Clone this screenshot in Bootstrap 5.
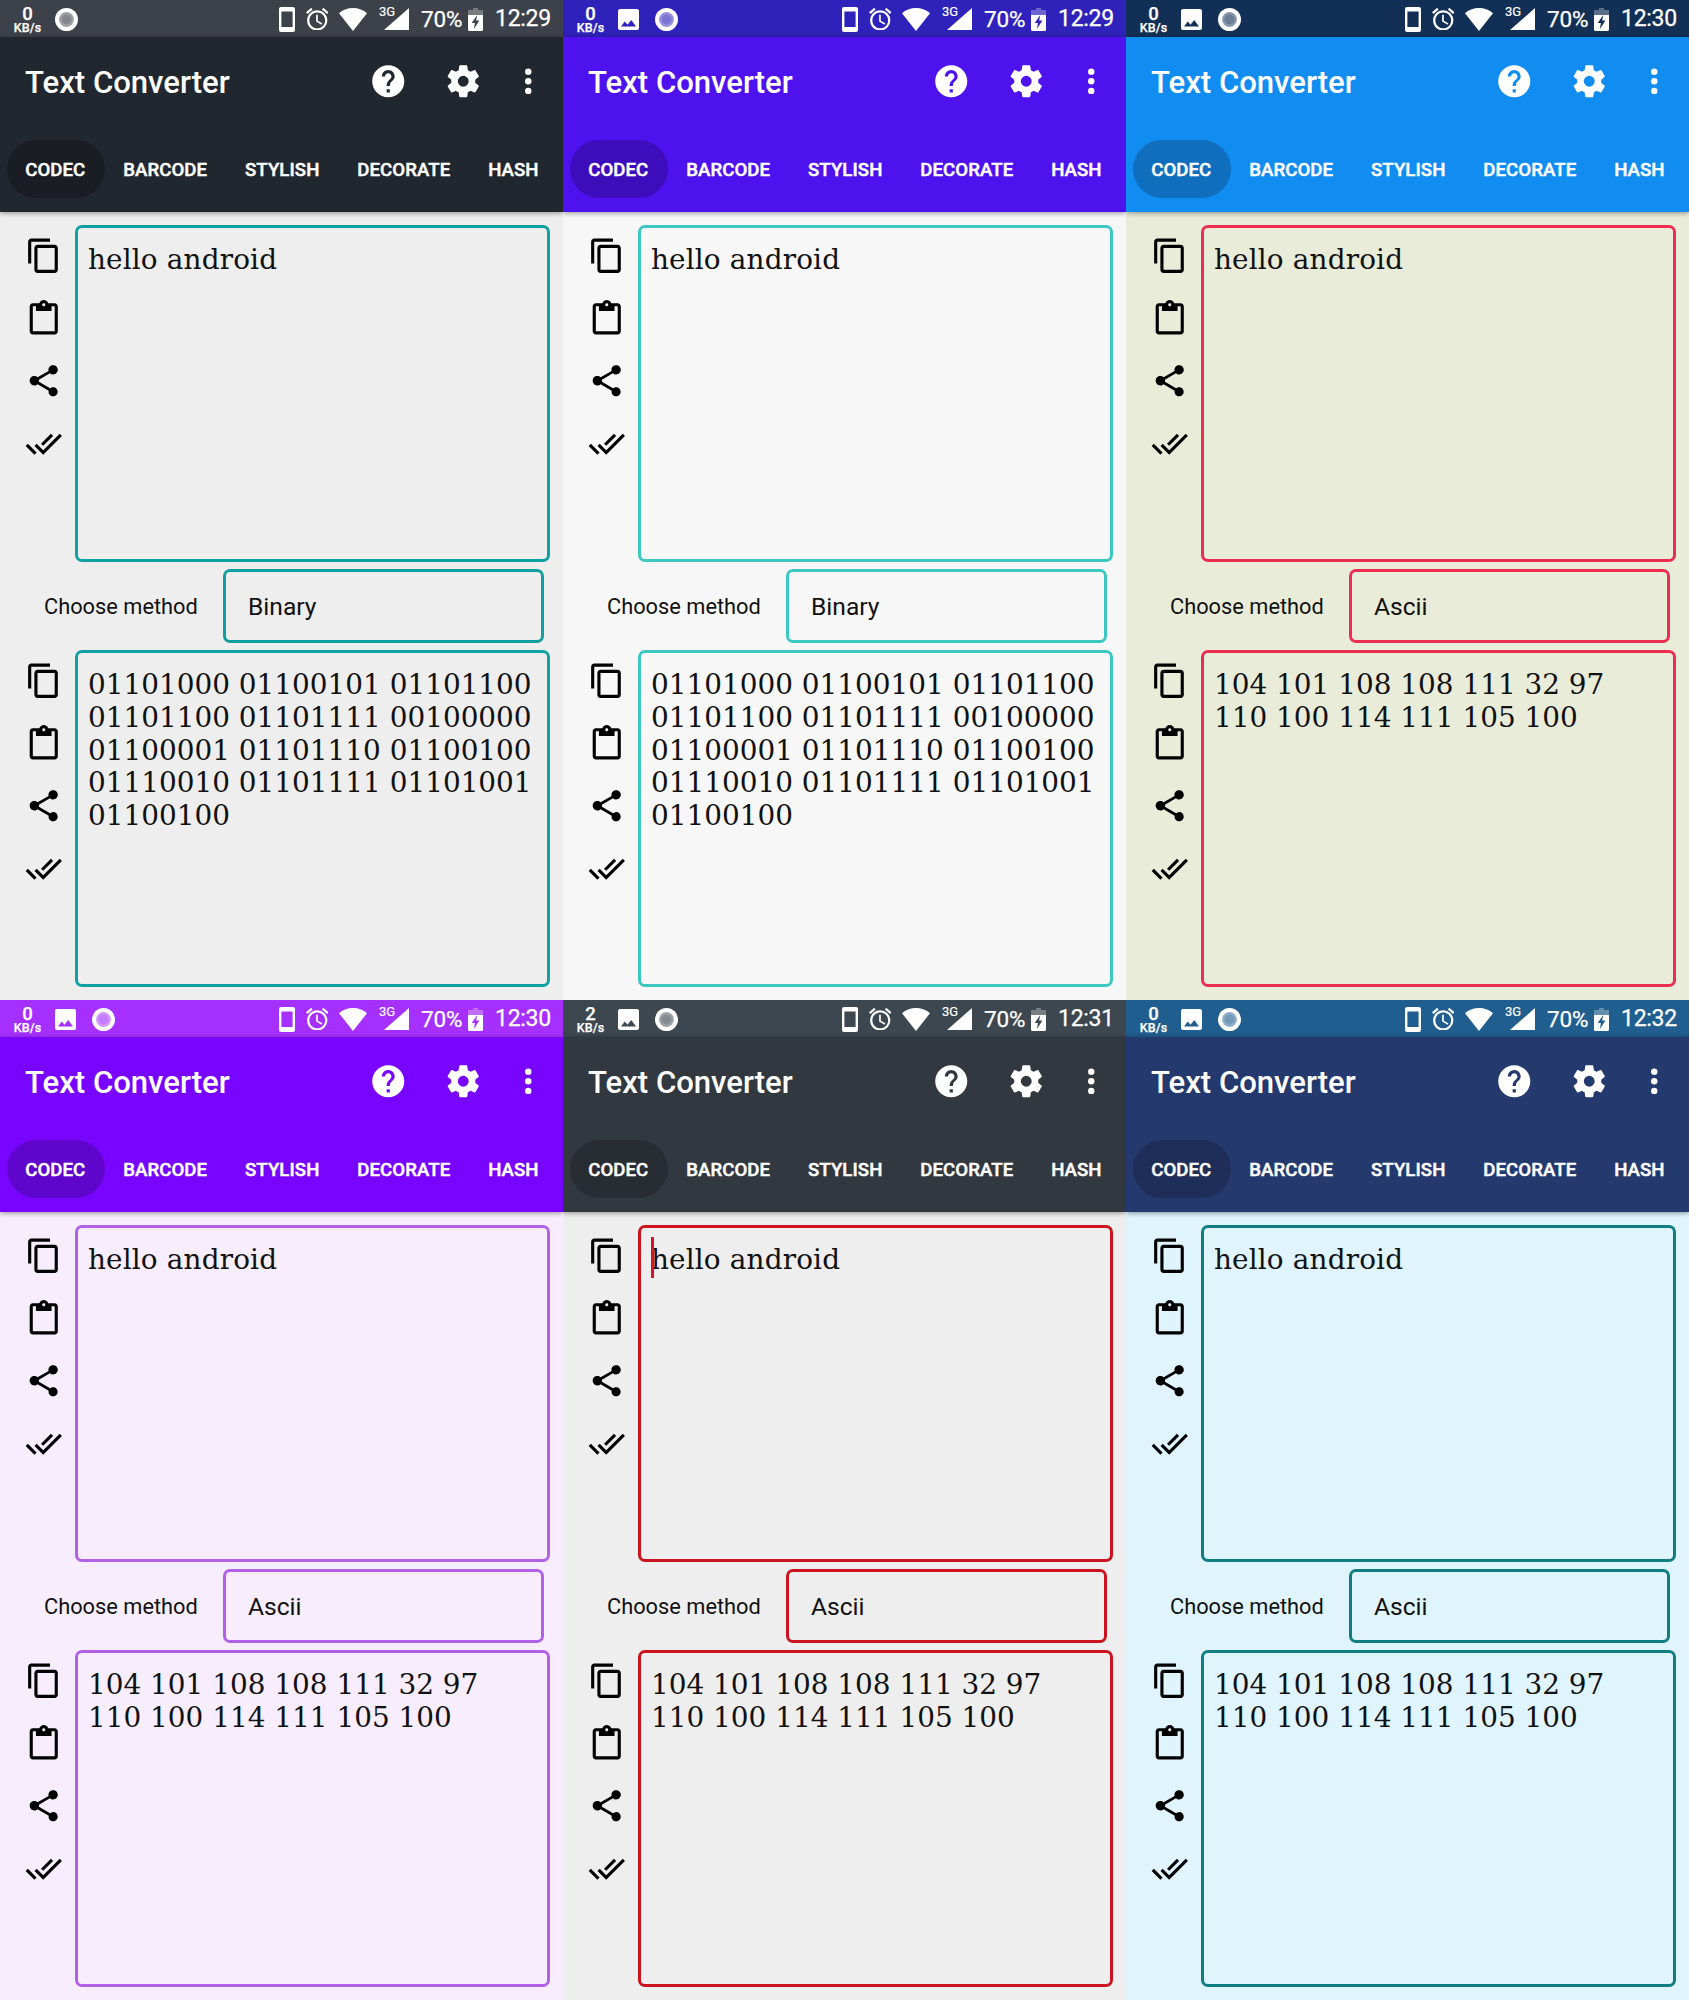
<!DOCTYPE html>
<html lang="en">
<head>
<meta charset="utf-8">
<meta name="viewport" content="width=device-width, initial-scale=1">
<title>Text Converter themes</title>
<link href="https://cdn.jsdelivr.net/npm/bootstrap@5.3.0/dist/css/bootstrap.min.css" rel="stylesheet">
<style>
body { font-family: Roboto, "Liberation Sans", sans-serif; width: 1689px; }
svg { display: block; fill: currentColor; flex: none; }
.phone { width: 563px; height: 1000px; background: var(--page); color: #111; overflow: hidden; }
.statusbar { height: 37px; background: var(--status); padding: 1px 13px 0 13px; }
.speed { width: 29px; font-weight: 500; text-align: center; line-height: 1; margin-right: 12.6px; -webkit-text-stroke: .25px; }
.speed .rate { font-size: 18.5px; line-height: 18px; margin-bottom: -1px; }
.speed .unit { font-size: 12.5px; line-height: 12px; letter-spacing: .1px; }
.notif { gap: 16px; }
.net { font-size: 13px; line-height: 13px; width: 17px; margin: -16px -12px 0 12px; -webkit-text-stroke: .2px; }
.pct { font-size: 22.5px; width: 41px; margin-left: 12px; letter-spacing: -.2px; padding-top: 1px; -webkit-text-stroke: .25px; }
.clock { font-size: 23px; width: 55px; margin-left: 12px; letter-spacing: -.3px; white-space: nowrap; padding-top: 1px; -webkit-text-stroke: .25px; }
.appbar { height: 175px; background: var(--bar); box-shadow: 0 1px 5px rgba(0,0,0,.42); position: relative; }
.titlebar { height: 88px; padding: 0 15.5px 0 25px; }
.apptitle { font-size: 31.1px; font-weight: 500; line-height: 40px; white-space: nowrap; padding-top: 4px; }
.tabs { padding: 15px 0 0 6.5px; }
.tabs a { height: 58px; padding: 3.5px 19.2px 0 18.7px; border-radius: 29px; font-size: 18.6px; font-weight: 500; color: #fff; text-decoration: none; white-space: nowrap; letter-spacing: .08px; -webkit-text-stroke: .45px; }
.tabs a.on { background: var(--pill); }
.content-area { padding: 13px 13px 0 0; }
.tools { width: 75px; padding: 12.3px 0 0 25px; gap: 25px; color: #000; }
.pane, .picker { border: 3px solid var(--line); border-radius: 7px; }
.pane { width: 475px; height: 337px; font: 27.9px/32.8px "DejaVu Serif", serif; padding: 16px 0 0 10px; position: relative; white-space: pre; }
.source { letter-spacing: .14px; }
.caret { position: absolute; left: 10px; top: 9px; width: 3px; height: 41px; background: #d3142a; }
.method { height: 88px; padding: 7px 6px 7px 44px; }
.method label { width: 179px; font-size: 21.8px; padding-top: 3px; }
.picker { width: 321px; height: 74px; font-size: 24.6px; padding: 3px 22px 0; }
.ms-alarm { margin-left: 11px; } .ms-wifi { margin-left: 11px; }
.ms-batt { margin-left: 6px; } .ms-gear { margin-left: 36.5px; } .ms-dots { margin-left: 27px; }
.t1 { --status: #3d414a; --bar: #21272f; --pill: #1b1d24; --page: #eeeeee; --line: #0fa0a2; }
.t2 { --status: #2e22bb; --bar: #4e12ee; --pill: #3e0dbb; --page: #f7f7f7; --line: #3cc8c0; }
.t3 { --status: #122f55; --bar: #118cf0; --pill: #0f6fbe; --page: #eaecda; --line: #ea2d50; }
.t4 { --status: #a530ff; --bar: #7805ff; --pill: #6005cb; --page: #f7edfc; --line: #b061e6; }
.t5 { --status: #3c4750; --bar: #31383f; --pill: #282d33; --page: #eeeeee; --line: #cc1420; }
.t6 { --status: #1f5e8f; --bar: #24396d; --pill: #1e2e58; --page: #e0f4fe; --line: #0f7d82; }
</style>
<script src="https://cdn.jsdelivr.net/npm/bootstrap@5.3.0/dist/js/bootstrap.bundle.min.js"></script>
</head>
<body>
<svg width="0" height="0" class="position-absolute">
  <symbol id="copy" viewBox="0 0 24 24"><path d="M16 1H4c-1.1 0-2 .9-2 2v14h2V3h12V1zm3 4H8c-1.1 0-2 .9-2 2v14c0 1.1.9 2 2 2h11c1.1 0 2-.9 2-2V7c0-1.1-.9-2-2-2zm0 16H8V7h11v14z"/></symbol>
  <symbol id="paste" viewBox="0 0 24 24"><path d="M19 2h-4.18C14.4.84 13.3 0 12 0c-1.3 0-2.4.84-2.82 2H5c-1.1 0-2 .9-2 2v16c0 1.1.9 2 2 2h14c1.1 0 2-.9 2-2V4c0-1.1-.9-2-2-2zm-7 0c.55 0 1 .45 1 1s-.45 1-1 1-1-.45-1-1 .45-1 1-1zm7 18H5V4h2v3h10V4h2v16z"/></symbol>
  <symbol id="share" viewBox="0 0 24 24"><path d="M18 16.08c-.76 0-1.44.3-1.96.77L8.91 12.7c.05-.23.09-.46.09-.7s-.04-.47-.09-.7l7.05-4.11c.54.5 1.25.81 2.04.81 1.66 0 3-1.34 3-3s-1.34-3-3-3-3 1.34-3 3c0 .24.04.47.09.7L8.04 9.81C7.5 9.31 6.79 9 6 9c-1.66 0-3 1.34-3 3s1.34 3 3 3c.79 0 1.5-.31 2.04-.81l7.12 4.16c-.05.21-.08.43-.08.65 0 1.61 1.31 2.92 2.92 2.92s2.92-1.31 2.92-2.92-1.31-2.92-2.92-2.92z"/></symbol>
  <symbol id="checks" viewBox="0 0 24 24"><path d="M.41 13.41L6 19l1.41-1.42L1.83 12M22.24 5.58L11.66 16.17 7.5 12l-1.43 1.41L11.66 19l11.99-12M18 7l-1.41-1.42-6.35 6.35 1.42 1.41L18 7z"/></symbol>
  <symbol id="help" viewBox="0 0 24 24"><path d="M12 2C6.48 2 2 6.48 2 12s4.48 10 10 10 10-4.48 10-10S17.52 2 12 2zm1 17h-2v-2h2v2zm2.07-7.75l-.9.92C13.45 12.9 13 13.5 13 15h-2v-.5c0-1.1.45-2.1 1.17-2.83l1.24-1.26c.37-.36.59-.86.59-1.41 0-1.1-.9-2-2-2s-2 .9-2 2H8c0-2.21 1.79-4 4-4s4 1.79 4 4c0 .88-.36 1.68-.93 2.25z"/></symbol>
  <symbol id="gear" viewBox="0 0 24 24"><path d="M19.43 12.98c.04-.32.07-.64.07-.98s-.03-.66-.07-.98l2.11-1.65c.19-.15.24-.42.12-.64l-2-3.46c-.12-.22-.39-.3-.61-.22l-2.49 1c-.52-.4-1.08-.73-1.69-.98l-.38-2.65C14.46 2.18 14.25 2 14 2h-4c-.25 0-.46.18-.49.42l-.38 2.65c-.61.25-1.17.59-1.69.98l-2.49-1c-.23-.09-.49 0-.61.22l-2 3.46c-.13.22-.07.49.12.64l2.11 1.65c-.04.32-.07.65-.07.98s.03.66.07.98l-2.11 1.65c-.19.15-.24.42-.12.64l2 3.46c.12.22.39.3.61.22l2.49-1c.52.4 1.08.73 1.69.98l.38 2.65c.03.24.24.42.49.42h4c.25 0 .46-.18.49-.42l.38-2.65c.61-.25 1.17-.59 1.69-.98l2.49 1c.23.09.49 0 .61-.22l2-3.46c.12-.22.07-.49-.12-.64l-2.11-1.65zM12 15.4a3.4 3.4 0 1 1 0-6.8 3.4 3.4 0 0 1 0 6.8z"/></symbol>
  <symbol id="dots" viewBox="0 0 24 24"><circle cx="12" cy="6" r="2"/><circle cx="12" cy="12" r="2"/><circle cx="12" cy="18" r="2"/></symbol>
  <symbol id="picture" viewBox="0 0 21 21"><path fill-rule="evenodd" d="M2 0h17a2 2 0 0 1 2 2v17a2 2 0 0 1-2 2H2a2 2 0 0 1-2-2V2a2 2 0 0 1 2-2zM3 17.5h15l-4.8-6.5-3.7 4.8-2.7-3.2z"/></symbol>
  <symbol id="record" viewBox="0 0 23 23"><circle cx="11.5" cy="11.5" r="11.5"/><circle cx="11.5" cy="11.5" r="7.4" fill="var(--status)" fill-opacity=".5"/><circle cx="11.5" cy="11.5" r="5" fill="var(--status)" fill-opacity=".25"/></symbol>
  <symbol id="device" viewBox="0 0 16 25"><path fill-rule="evenodd" d="M2 0h12a2 2 0 0 1 2 2v21a2 2 0 0 1-2 2H2a2 2 0 0 1-2-2V2a2 2 0 0 1 2-2zM2.4 4.5v15.5h11.2V4.5z"/></symbol>
  <symbol id="alarm" viewBox="2 2 20 20"><path d="M22 5.72l-4.6-3.86-1.29 1.53 4.6 3.86L22 5.72zM7.88 3.39L6.6 1.86 2 5.71l1.29 1.53 4.59-3.85zM12.5 8H11v6l4.75 2.85.75-1.23-4-2.37V8zM12 4c-4.97 0-9 4.03-9 9s4.02 9 9 9a9 9 0 0 0 0-18zm0 16c-3.87 0-7-3.13-7-7s3.13-7 7-7 7 3.13 7 7-3.13 7-7 7z"/></symbol>
  <symbol id="wifi" viewBox="0 0 28 23"><path d="M14 23L0 5.2C3.5 2 8.5 0 14 0s10.5 2 14 5.2z"/></symbol>
  <symbol id="signal" viewBox="0 0 25 22"><path d="M25 0v22H0z"/></symbol>
  <symbol id="battery" viewBox="0 0 15 23"><path opacity=".3" d="M5 0h5v2h5v5H0V2h5z"/><path fill-rule="evenodd" d="M0 7h15v14.5a1.5 1.5 0 0 1-1.5 1.5h-12A1.5 1.5 0 0 1 0 21.5zM9.2 7L3.7 15h3.2l-1 6 5.5-8.5H8.2z"/></symbol>
</svg>

<main id="gallery" class="d-flex flex-wrap"></main>

<script>
const icon = (name, w, h = w, cls = "") =>
  `<svg width="${w}" height="${h}" class="${cls}" aria-hidden="true"><use href="#${name}"/></svg>`;

const binary = "01101000 01100101 01101100\n01101100 01101111 00100000\n01100001 01101110 01100100\n01110010 01101111 01101001\n01100100";
const ascii = "104 101 108 108 111 32 97\n110 100 114 111 105 100";

const themes = [
  { name: "t1", time: "12:29", rate: 0, method: "Binary", out: binary },
  { name: "t2", time: "12:29", rate: 0, shot: true, method: "Binary", out: binary },
  { name: "t3", time: "12:30", rate: 0, shot: true, method: "Ascii", out: ascii },
  { name: "t4", time: "12:30", rate: 0, shot: true, method: "Ascii", out: ascii },
  { name: "t5", time: "12:31", rate: 2, shot: true, method: "Ascii", out: ascii, caret: true },
  { name: "t6", time: "12:32", rate: 0, shot: true, method: "Ascii", out: ascii }
];

const tools = `<div class="tools d-flex flex-column">
  ${["copy", "paste", "share", "checks"].map(n => icon(n, 37.5)).join("")}</div>`;

document.getElementById("gallery").innerHTML = themes.map(t => `
<section class="phone ${t.name}">
  <div class="statusbar d-flex align-items-center text-white">
    <div class="speed"><div class="rate">${t.rate}</div><div class="unit">KB/s</div></div>
    <div class="notif d-flex align-items-center">${t.shot ? icon("picture", 21) : ""}${icon("record", 23)}</div>
    <div class="d-flex align-items-center ms-auto">
      ${icon("device", 16, 25)}${icon("alarm", 22.5, 22.5, "ms-alarm")}${icon("wifi", 28, 23, "ms-wifi")}
      <span class="net">3G</span>${icon("signal", 25, 22)}
      <span class="pct">70%</span>${icon("battery", 15, 23, "ms-batt")}
      <span class="clock">${t.time}</span>
    </div>
  </div>
  <header class="appbar text-white">
    <div class="titlebar d-flex align-items-center">
      <div class="apptitle me-auto">Text Converter</div>
      ${icon("help", 38.5)}${icon("gear", 38.5, 38.5, "ms-gear")}${icon("dots", 38.5, 38.5, "ms-dots")}
    </div>
    <nav class="tabs d-flex">
      ${["CODEC", "BARCODE", "STYLISH", "DECORATE", "HASH"].map((n, i) =>
        `<a href="#" class="d-flex align-items-center ${i ? "" : "on"}">${n}</a>`).join("")}
    </nav>
  </header>
  <div class="content-area">
    <div class="d-flex">${tools}<div class="pane source">${t.caret ? '<i class="caret"></i>' : ""}hello android</div></div>
    <div class="method d-flex align-items-center"><label>Choose method</label>
      <div class="picker d-flex align-items-center">${t.method}</div></div>
    <div class="d-flex">${tools}<div class="pane">${t.out}</div></div>
  </div>
</section>`).join("");
</script>
</body>
</html>
